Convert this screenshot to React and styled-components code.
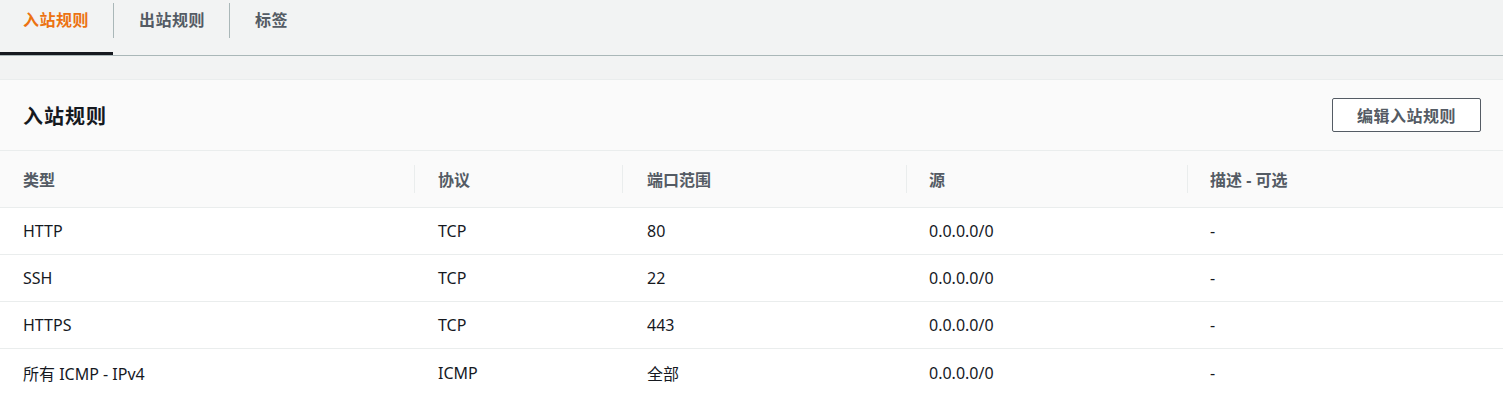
import React from "react";
import styled, { createGlobalStyle } from "styled-components";

const Global = createGlobalStyle`
  html, body { margin: 0; padding: 0; background: #f2f3f3; }
  body { font-family: "Noto Sans", "Noto Sans CJK SC", sans-serif; color: #16191f; }
  * { box-sizing: border-box; }
`;

const Page = styled.div`
  display: flex;
  flex-direction: column;
  background: #f2f3f3;
  min-height: 395px;
`;

const TabBar = styled.div`
  display: flex;
  align-items: flex-start;
  height: 56px;
  border-bottom: 1px solid #aab7b8;
`;

const Tab = styled.div`
  height: 55px;
  padding: 8px 24px 0 25px;
  line-height: 24px;
  font-size: 16px;
  font-weight: 700;
  letter-spacing: 0.5px;
  color: ${(p) => (p.$active ? "#ec7211" : "#545b64")};
  border-bottom: 3px solid ${(p) => (p.$active ? "#16191f" : "transparent")};
  &:first-child { padding-left: 23px; }
`;

const TabDivider = styled.div`
  width: 1px;
  height: 35px;
  margin-top: 3px;
  background: #aab7b8;
`;

const Spacer = styled.div`
  height: 23px;
`;

const Card = styled.section`
  background: #fff;
  border-top: 1px solid #eaeded;
  display: flex;
  flex-direction: column;
`;

const CardHeader = styled.div`
  display: flex;
  align-items: center;
  justify-content: space-between;
  height: 71px;
  padding: 0 22px 0 23px;
  background: #fafafa;
  border-bottom: 1px solid #eaeded;
`;

const Title = styled.h2`
  margin: 0;
  font-size: 20px;
  font-weight: 700;
  color: #16191f;
  letter-spacing: 1px;
`;

const Button = styled.button`
  height: 34px;
  padding: 0 24px;
  background: #fff;
  border: 1px solid #545b64;
  border-radius: 2px;
  font-family: inherit;
  font-size: 16px;
  font-weight: 700;
  letter-spacing: 0.5px;
  color: #545b64;
`;

const Grid = styled.div`
  display: grid;
  grid-template-columns: 414px 208px 284px 281px 1fr;
`;

const HeadCell = styled.div`
  position: relative;
  height: 57px;
  display: flex;
  align-items: center;
  padding-left: ${(p) => p.$pad}px;
  background: #fafafa;
  border-bottom: 1px solid #eaeded;
  font-size: 16px;
  font-weight: 700;
  color: #545b64;
  &::before {
    content: "";
    display: ${(p) => (p.$first ? "none" : "block")};
    position: absolute;
    left: 0;
    top: 14px;
    width: 1px;
    height: 28px;
    background: #eaeded;
  }
`;

const Cell = styled.div`
  height: 47px;
  display: flex;
  align-items: center;
  padding-left: ${(p) => p.$pad}px;
  background: #fff;
  border-bottom: ${(p) => (p.$last ? "none" : "1px solid #eaeded")};
  font-size: 16px;
  color: #16191f;
`;

const pads = [23, 24, 25, 23, 23];
const columns = ["类型", "协议", "端口范围", "源", "描述 - 可选"];
const rows = [
  ["HTTP", "TCP", "80", "0.0.0.0/0", "-"],
  ["SSH", "TCP", "22", "0.0.0.0/0", "-"],
  ["HTTPS", "TCP", "443", "0.0.0.0/0", "-"],
  ["所有 ICMP - IPv4", "ICMP", "全部", "0.0.0.0/0", "-"],
];

export default function App() {
  return (
    <Page>
      <Global />
      <TabBar>
        <Tab $active>入站规则</Tab>
        <TabDivider />
        <Tab>出站规则</Tab>
        <TabDivider />
        <Tab>标签</Tab>
      </TabBar>
      <Spacer />
      <Card>
        <CardHeader>
          <Title>入站规则</Title>
          <Button>编辑入站规则</Button>
        </CardHeader>
        <Grid>
          {columns.map((c, i) => (
            <HeadCell key={c} $first={i === 0} $pad={pads[i]}>{c}</HeadCell>
          ))}
          {rows.map((r, ri) =>
            r.map((v, ci) => (
              <Cell key={ri + "-" + ci} $pad={pads[ci]} $last={ri === rows.length - 1}>
                {v}
              </Cell>
            ))
          )}
        </Grid>
      </Card>
    </Page>
  );
}
